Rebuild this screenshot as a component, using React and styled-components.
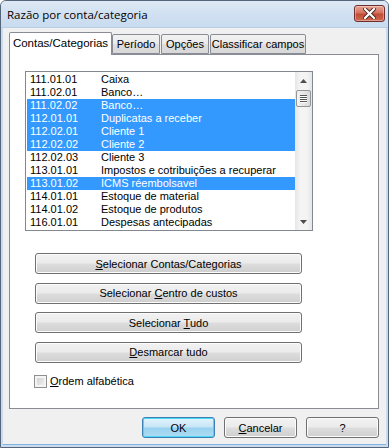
import React from "react";
import styled, { createGlobalStyle } from "styled-components";

const rows = [
  { code: "111.01.01", name: "Caixa" },
  { code: "111.02.01", name: "Banco…" },
  { code: "111.02.02", name: "Banco…", sel: true },
  { code: "112.01.01", name: "Duplicatas a receber", sel: true },
  { code: "112.02.01", name: "Cliente 1", sel: true },
  { code: "112.02.02", name: "Cliente 2", sel: true },
  { code: "112.02.03", name: "Cliente 3" },
  { code: "113.01.01", name: "Impostos e cotribuições a recuperar" },
  { code: "113.01.02", name: "ICMS réembolsavel", sel: true },
  { code: "114.01.01", name: "Estoque de material" },
  { code: "114.01.02", name: "Estoque de produtos" },
  { code: "116.01.01", name: "Despesas antecipadas" },
];

function App() {
  return (
    <>
      <GlobalStyle />
      <Window>
        <TitleBar>
          <Title>Razão por conta/categoria</Title>
          <CloseButton>
            <svg width="13" height="11" viewBox="0 0 13 11">
              <path d="M2 1 L11 10 M11 1 L2 10" stroke="#4a2020" strokeWidth="4" strokeLinecap="square" />
              <path d="M2 1 L11 10 M11 1 L2 10" stroke="#fff" strokeWidth="2.2" strokeLinecap="square" />
            </svg>
          </CloseButton>
        </TitleBar>

        <Body>
          <TabStrip>
            <Tab active>Contas/Categorias</Tab>
            <Tab w={48}>Período</Tab>
            <Tab w={48}>Opções</Tab>
            <Tab w={96}>Classificar campos</Tab>
          </TabStrip>

          <Panel>
            <ListBox>
              <Rows>
                {rows.map((r, i) => (
                  <Row key={i} sel={r.sel}>
                    <Code>{r.code}</Code>
                    <span>{r.name}</span>
                  </Row>
                ))}
              </Rows>
              <ScrollBar>
                <Arrow>
                  <svg width="7" height="4" viewBox="0 0 7 4"><path d="M0 4 L3.5 0 L7 4 Z" fill="#4d4d4d" /></svg>
                </Arrow>
                <Track>
                  <Thumb>
                    <Grip />
                    <Grip />
                    <Grip />
                    <Grip />
                  </Thumb>
                </Track>
                <Arrow>
                  <svg width="7" height="4" viewBox="0 0 7 4"><path d="M0 0 L7 0 L3.5 4 Z" fill="#4d4d4d" /></svg>
                </Arrow>
              </ScrollBar>
            </ListBox>

            <ButtonStack>
              <WideButton><span><u>S</u>elecionar Contas/Categorias</span></WideButton>
              <WideButton><span>Selecionar <u>C</u>entro de custos</span></WideButton>
              <WideButton><span>Selecionar <u>T</u>udo</span></WideButton>
              <WideButton><span><u>D</u>esmarcar tudo</span></WideButton>
            </ButtonStack>

            <CheckRow>
              <CheckBox />
              <span><u>O</u>rdem alfabética</span>
            </CheckRow>
          </Panel>

          <Footer>
            <DialogButton primary>OK</DialogButton>
            <DialogButton><span><u>C</u>ancelar</span></DialogButton>
            <DialogButton>?</DialogButton>
          </Footer>
        </Body>
      </Window>
    </>
  );
}

const GlobalStyle = createGlobalStyle`
  * { box-sizing: border-box; }
  body {
    margin: 0;
    font-family: "Liberation Sans", Arial, sans-serif;
    font-size: 11px;
    color: #000;
  }
  u { text-decoration: underline; text-underline-offset: 1px; }
`;

const Window = styled.div`
  width: 389px;
  height: 448px;
  display: flex;
  flex-direction: column;
  background: #c9dbef;
  border: 1px solid #55667a;
  border-radius: 6px 6px 0 0;
  overflow: hidden;
`;

const TitleBar = styled.div`
  height: 27px;
  flex: none;
  display: flex;
  align-items: flex-start;
  justify-content: space-between;
  padding: 0 3px 0 6px;
  background: linear-gradient(#dfe9f5, #d3e2f2 40%, #c9dbef);
  border-bottom: 1px solid #b9cde5;
`;

const Title = styled.div`
  font-family: "Open Sans", "Liberation Sans", sans-serif;
  font-size: 11.5px;
  line-height: 16px;
  margin-top: 6px;
  color: #000;
`;

const CloseButton = styled.div`
  width: 31px;
  height: 17px;
  margin-top: 4px;
  display: flex;
  align-items: center;
  justify-content: center;
  border: 1px solid #6e2f2f;
  border-radius: 3px;
  background: linear-gradient(#e8a493, #d4735f 45%, #c14b33 55%, #cf6a4f);
  box-shadow: inset 0 0 0 1px rgba(255, 255, 255, 0.35);
`;

const Body = styled.div`
  flex: 1;
  display: flex;
  flex-direction: column;
  background: #f0f0f0;
  margin: 0 2px 2px 2px;
  padding: 4px 7px 0 6px;
  border-bottom: 1px solid #7fb4e0;
`;

const TabStrip = styled.div`
  display: flex;
  align-items: flex-end;
  gap: 1px;
  height: 22px;
  position: relative;
  z-index: 1;
`;

const Tab = styled.div`
  width: ${({ active, w }) => (active ? "103px" : `${w}px`)};
  height: ${({ active }) => (active ? "23px" : "20px")};
  margin-bottom: ${({ active }) => (active ? "-1px" : "0")};
  margin-right: ${({ active }) => (active ? "-1px" : "0")};
  display: flex;
  align-items: center;
  justify-content: center;
  padding-bottom: ${({ active }) => (active ? "2px" : "0")};
  border: 1px solid #898c95;
  border-bottom: ${({ active }) => (active ? "none" : "1px solid #898c95")};
  border-radius: 2px 2px 0 0;
  background: ${({ active }) =>
    active ? "#ffffff" : "linear-gradient(#f2f2f2, #ebebeb 45%, #dddddd 55%, #d8d8d8)"};
  white-space: nowrap;
  font-size: ${({ active }) => (active ? "11.5px" : "11px")};
`;

const Panel = styled.div`
  height: 355px;
  flex: none;
  background: #ffffff;
  border: 1px solid #898c95;
  padding: 16px 15px 0 15px;
  display: flex;
  flex-direction: column;
`;

const ListBox = styled.div`
  width: 288px;
  height: 160px;
  display: flex;
  border: 1px solid #828790;
  background: #fff;
  padding: 1px 0 1px 1px;
`;

const Rows = styled.div`
  flex: 1;
  display: flex;
  flex-direction: column;
`;

const Row = styled.div`
  height: 13px;
  line-height: 13px;
  display: flex;
  padding-left: 3px;
  white-space: nowrap;
  overflow: hidden;
  background: ${({ sel }) => (sel ? "#3399ff" : "transparent")};
  color: ${({ sel }) => (sel ? "#ffffff" : "#000000")};
`;

const Code = styled.span`
  width: 71px;
  flex: none;
`;

const ScrollBar = styled.div`
  width: 17px;
  margin-top: -1px;
  margin-bottom: -1px;
  display: flex;
  flex-direction: column;
  background: linear-gradient(90deg, #e6e6e6, #f4f4f4 30%, #f4f4f4 70%, #e6e6e6);
`;

const Arrow = styled.div`
  height: 17px;
  flex: none;
  display: flex;
  align-items: center;
  justify-content: center;
`;

const Track = styled.div`
  flex: 1;
  padding: 1px 1px 0;
`;

const Thumb = styled.div`
  height: 17px;
  border: 1px solid #959595;
  border-radius: 2px;
  background: linear-gradient(90deg, #f3f3f3, #e6e6e6 50%, #d9d9d9);
  display: flex;
  flex-direction: column;
  align-items: center;
  justify-content: center;
  gap: 1px;
`;

const Grip = styled.div`
  width: 7px;
  height: 1px;
  background: #555;
  box-shadow: 0 1px 0 #fff;
`;

const ButtonStack = styled.div`
  display: flex;
  flex-direction: column;
  gap: 8.5px;
  margin: 22px 0 0 10px;
`;

const WideButton = styled.div`
  width: 267px;
  height: 21px;
  display: flex;
  align-items: center;
  justify-content: center;
  border: 1px solid #707070;
  border-radius: 3px;
  background: linear-gradient(#f2f2f2, #ebebeb 48%, #dddddd 52%, #cfcfcf);
  box-shadow: inset 0 0 0 1px #fcfcfc;
  white-space: pre;
`;

const CheckRow = styled.div`
  display: flex;
  align-items: center;
  gap: 3px;
  margin: 12px 0 0 9px;
`;

const CheckBox = styled.div`
  width: 13px;
  height: 13px;
  border: 1px solid #8e8f8f;
  background: linear-gradient(135deg, #cbcbcb, #f6f6f6);
  box-shadow: inset 0 0 0 2px #f4f4f4;
`;

const Footer = styled.div`
  display: flex;
  justify-content: flex-end;
  gap: 9px;
  margin-top: 8px;
  padding-right: 0;
`;

const DialogButton = styled.div`
  width: 73px;
  height: 21px;
  display: flex;
  align-items: center;
  justify-content: center;
  border: 1px solid ${({ primary }) => (primary ? "#3c7fb1" : "#707070")};
  border-radius: 3px;
  background: ${({ primary }) =>
    primary
      ? "linear-gradient(#e5f4fc, #c4e5f6 48%, #98d1ef 52%, #b0dcf3)"
      : "linear-gradient(#f2f2f2, #ebebeb 48%, #dddddd 52%, #cfcfcf)"};
  box-shadow: inset 0 0 0 1px ${({ primary }) => (primary ? "#48d9f9" : "#fcfcfc")};
`;

export default App;
